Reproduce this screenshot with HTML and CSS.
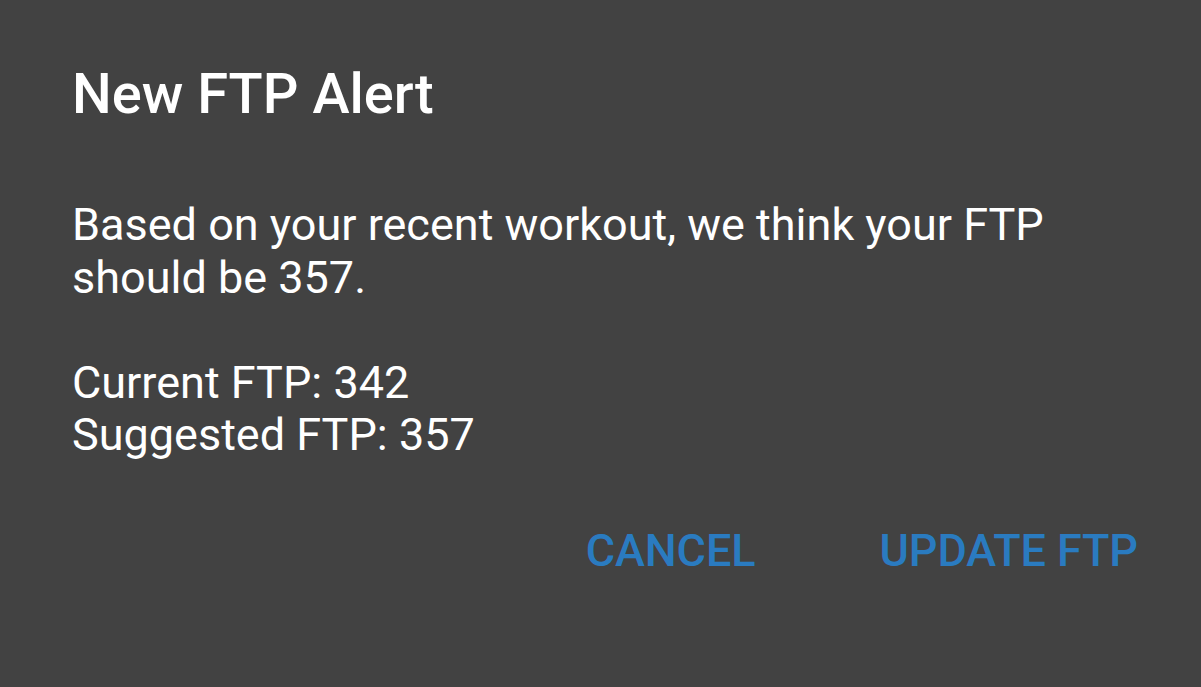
FILE: index.html
```html
<!DOCTYPE html>
<html>
<head>
<meta charset="utf-8">
<link rel="stylesheet" href="styles.css">
</head>
<body>
<div class="dialog">
  <h1 class="title">New FTP Alert</h1>
  <div class="message">
    <p class="line">Based on your recent workout, we think your FTP should be 357.</p>
    <p class="line gap">Current FTP: 342<br>Suggested FTP: 357</p>
  </div>
  <div class="actions">
    <button class="btn">CANCEL</button>
    <button class="btn">UPDATE FTP</button>
  </div>
</div>
</body>
</html>
```
FILE: styles.css
```css
html, body {
  margin: 0;
  padding: 0;
  background: #424242;
}
.dialog {
  width: 1201px;
  height: 687px;
  box-sizing: border-box;
  padding: 0 63px 0 72px;
  font-family: Roboto, "Noto Sans", sans-serif;
  color: #ffffff;
  background: #424242;
  overflow: hidden;
}
.title {
  margin: 0;
  padding-top: 58px;
  font-size: 56px;
  font-weight: 500;
  line-height: 72px;
}
.message {
  margin-top: 69px;
  font-size: 45px;
  line-height: 52.5px;
  width: 1040px;
}
.line {
  margin: 0;
}
.gap {
  margin-top: 52.5px;
}
.actions {
  display: flex;
  justify-content: flex-end;
  gap: 124px;
  margin-top: 63px;
}
.btn {
  background: none;
  border: none;
  padding: 0;
  font-family: Roboto, sans-serif;
  font-weight: 500;
  font-size: 45px;
  letter-spacing: -0.1px;
  color: #2a7bc0;
  line-height: 52px;
}
```
